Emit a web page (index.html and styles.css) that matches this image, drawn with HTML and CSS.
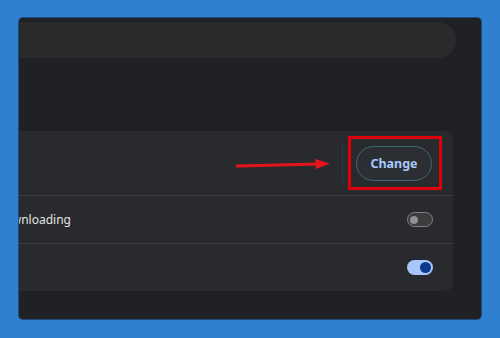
FILE: index.html
```html
<!DOCTYPE html>
<html>
<head>
<meta charset="utf-8">
<link rel="stylesheet" href="styles.css">
</head>
<body>
<div class="window">
  <div class="search"></div>
  <div class="card">
    <div class="row row-top">
      <div class="label-cut">Location</div>
      <div class="sep"></div>
      <button class="btn">Change</button>
      <svg class="arrow" width="100" height="14" viewBox="0 0 100 14">
        <line x1="2" y1="8" x2="84" y2="6" stroke="#e3141b" stroke-width="3" stroke-linecap="round"/>
        <polygon points="80,1 95,5.5 81,11" fill="#e3141b"/>
      </svg>
      <div class="highlight"></div>
    </div>
    <div class="row">
      <div class="label-cut">Ask where to save each file before downloading</div>
      <span class="toggle off"><span class="knob"></span></span>
    </div>
    <div class="row">
      <div class="label-cut">Show downloads</div>
      <span class="toggle on"><span class="knob"></span></span>
    </div>
  </div>
</div>
</body>
</html>
```

FILE: styles.css
```css
html, body {
  margin: 0;
  padding: 0;
}
body {
  width: 500px;
  height: 338px;
  background: #2f80d0;
  font-family: "Noto Sans", "Open Sans", Arial, sans-serif;
  overflow: hidden;
}
.window {
  margin: 18px 0 0 19px;
  width: 462px;
  height: 301px;
  background: #202124;
  border-radius: 4px;
  box-shadow: 0 0 0 1px rgba(15, 35, 60, 0.55);
  overflow: hidden;
  display: flex;
  flex-direction: column;
}
.search {
  margin: 4px 25px 0 -20px;
  height: 36px;
  border-radius: 18px;
  background: #2a2a2b;
  flex: none;
}
.card {
  position: relative;
  margin: 73px 28px 0 -10px;
  background: #292a2d;
  border-radius: 8px;
  display: flex;
  flex-direction: column;
}
.row {
  position: relative;
  height: 47px;
  display: flex;
  align-items: center;
  padding-right: 20px;
  border-top: 1px solid #3a3b3e;
}
.row-top {
  height: 64px;
  border-top: none;
  padding-right: 21px;
}
.label-cut {
  width: 400px;
  margin-left: -338px;
  text-align: right;
  white-space: nowrap;
  font-size: 12px;
  color: #e3e3e3;
  flex: none;
  line-height: 16px;
}
.row-top .label-cut {
  visibility: hidden;
}
.row:last-child .label-cut {
  visibility: hidden;
}
.sep {
  margin-left: auto;
  width: 1px;
  height: 40px;
  background: #35363a;
  margin-right: 13px;
}
.btn {
  width: 76px;
  height: 35px;
  border-radius: 18px;
  border: 1px solid #3f6878;
  background: #2b2f33;
  color: #a8c7fa;
  font-family: "Noto Sans", "Open Sans", Arial, sans-serif;
  font-weight: 700;
  font-size: 12.5px;
  padding: 0;
  margin-top: 1px;
}
.arrow {
  position: absolute;
  left: 226px;
  top: 27px;
}
.highlight {
  position: absolute;
  left: 339px;
  top: 5px;
  width: 94px;
  height: 54px;
  box-sizing: border-box;
  border: 3px solid #e0000b;
}
.toggle {
  margin-left: auto;
  position: relative;
  width: 26px;
  height: 15px;
  border-radius: 8px;
  box-sizing: border-box;
  display: flex;
  align-items: center;
}
.toggle.off {
  background: #3c3d3f;
  border: 1px solid #7f8183;
  padding-left: 2px;
}
.toggle.off .knob {
  width: 8px;
  height: 8px;
  border-radius: 50%;
  background: #8f9193;
}
.toggle.on {
  background: #a8c7fa;
  justify-content: flex-end;
  padding-right: 2px;
}
.toggle.on .knob {
  width: 11px;
  height: 11px;
  border-radius: 50%;
  background: #0b3a8c;
}
```
